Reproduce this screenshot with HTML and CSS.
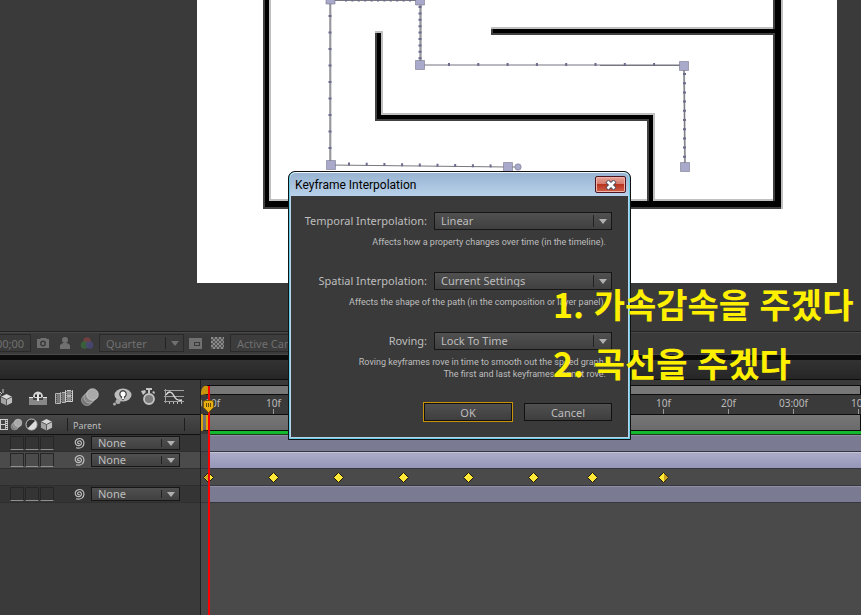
FILE: index.html
```html
<!DOCTYPE html>
<html lang="ko">
<head>
  <meta charset="UTF-8" />
  <meta name="viewport" content="width=device-width, initial-scale=1" />
  <title>Keyframe Interpolation</title>
  <link rel="stylesheet" href="styles.css">
</head>
<body>
  <svg class="defs" aria-hidden="true">
    <defs>
      <symbol id="cube" viewBox="0 0 14 14">
        <path fill="#d8d8d8" d="M7 1l6 3-6 3-6-3z"/>
        <path fill="#a2a2a2" d="M1 4l6 3v6.500l-6-3z"/>
        <path fill="#bdbdbd" d="M13 4L7 7v6.500l6-3z"/>
        <path fill="none" stroke="#555" d="M1 4l6 3 6-3M7 7v6"/>
      </symbol>
      <symbol id="blur" viewBox="0 0 20 20">
        <circle cx="7" cy="13" r="5.500" fill="#747474" stroke="#bbb" stroke-width=".6"/>
        <circle cx="9.500" cy="10.500" r="5.500" fill="#858585" stroke="#ccc" stroke-width=".6"/>
        <circle cx="12.500" cy="7.500" r="5.800" fill="#a9a9a9" stroke="#ddd" stroke-width=".6"/>
      </symbol>
      <symbol id="swirl" viewBox="0 0 12 12">
        <path fill="none" stroke="#bdbdbd" stroke-width="1.200" d="M6.500 6.200c-.4.9-2 .5-1.900-.8.1-1.600 2.600-2 3.500-.4 1 2-.8 3.900-2.700 3.700C2.800 8.500 1.600 5.800 2.700 3.600 4 1.200 7.600.8 9.600 2.700c1.900 2 1.700 5.400-.4 7.200-1.500 1.200-4 1.600-6.200.9"/>
      </symbol>
    </defs>
  </svg>

  <main class="viewer">
    <svg class="comp" viewBox="197 0 640 283">
      <!-- walls: light edge up/right, dark edge down/left -->
      <g fill="#c0c0c0">
        <path d="M263 0h8v209h-8zM491 27h284v4H491zM375 31h8v84h-8zM377 113h278v4H377zM649 113h6v90h-6zM263 199h512v4H263zM777 0h6v209h-6z"/>
      </g>
      <g fill="#404040">
        <path d="M263 0h4v209h-4zM491 29h284v6H491zM375 33h4v88h-4zM375 117h276v4H375zM647 119h4v82h-4zM263 203h518v6H263zM773 0h6v201h-6z"/>
      </g>
      <g fill="#000">
        <path d="M265 0h4v203h-4zM493 29h284v4H493zM377 33h4v84h-4zM377 115h276v4H377zM649 115h4v88h-4zM265 201h516v6H265zM775 0h6v207h-6z"/>
      </g>
      <g fill="none" stroke="#b9b9bf" stroke-width="2">
        <path d="M330.500 0V165M420 1V65H684L685 167"/>
        <path stroke-width="1" stroke="#77777f" d="M330 0V165L508 167H518M331 .5H420M421 1V66M600 65.500H684M684 66L685 167"/>
      </g>
      <g fill="none" stroke="#6b6b8c" stroke-width="3">
        <path stroke-dasharray="2 14.500" d="M330 15V160"/>
        <path stroke-dasharray="2 15.700" d="M348 164L500 166"/>
        <path stroke-dasharray="2 4.400" d="M420 6V60M345 0H416"/>
        <path stroke-dasharray="2 27.300" d="M448 64.500H680"/>
        <path stroke-dasharray="2 7.200" d="M684.500 73V162"/>
      </g>
      <g fill="#a9a9cb" stroke="#77778c" stroke-width=".6">
        <path d="M326 -5h9v9h-9zM415.500 -4h9v9h-9zM415.500 60.500h9v9h-9zM679.500 61.500h9v9h-9zM680.500 162.500h9v9h-9zM326.500 160.500h9v9h-9zM503.500 162.500h9v9h-9z"/>
        <circle cx="518" cy="167" r="3.200"/>
      </g>
    </svg>
  </main>

  <div class="viewer-bar">
    <button class="timecode">0;00;00;00</button>
    <svg class="snapshot" width="14" height="12"><path fill="#707070" d="M1 2h3l1-1h5l1 1h2v9H1z"/><circle cx="7" cy="6.500" r="3" fill="#3a3a3a"/><circle cx="7" cy="6.500" r="1.500" fill="#707070"/></svg>
    <svg class="person" width="12" height="14"><circle cx="6" cy="4" r="3" fill="#707070"/><path fill="#707070" d="M1 13V9l3-2h4l3 2v4z"/></svg>
    <svg class="channels" width="14" height="14"><circle cx="7" cy="5" r="3.800" fill="#704040"/><circle cx="4.500" cy="9" r="3.800" fill="#3b5f3b"/><circle cx="9.500" cy="9" r="3.800" fill="#484878" opacity=".85"/></svg>
    <span class="drop dim quality"><select aria-label="Resolution"><option>Quarter</option></select></span>
    <svg class="region" width="13" height="11"><path fill="#707070" fill-rule="evenodd" d="M0 0h13v11H0zM5 4v4h6V4z"/><path fill="#707070" d="M6 5h4v2H6z"/></svg>
    <svg class="checker" width="13" height="12"><path fill="#555" d="M0 0h13v12H0z"/><path stroke="#8a8a8a" stroke-width="2" stroke-dasharray="2 2" d="M0 1h13M2 3h11M0 5h13M2 7h11M0 9h13M2 11h11"/></svg>
    <span class="drop dim camera"><select aria-label="View"><option>Active Camera</option></select></span>
  </div>
  <div class="tab-strip"></div>

  <section class="timeline">
    <div class="layers">
      <div class="toolbar">
        <div class="group">
          <button aria-label="Draft 3D"><svg viewBox="0 0 20 20"><use href="#cube" x="4" y="6" width="13" height="13"/><path stroke="#ccc" d="M3 4l3 3M7 2v4M1 8h4"/></svg></button>
        </div>
        <div class="group">
          <button aria-label="Shy layers"><svg viewBox="0 0 20 20"><path fill="#888" d="M1 10h18v8H1z"/><path fill="#444" d="M5 10h10v3H5z"/><path fill="#d6d6d6" d="M5 10a5 5.500 0 0 1 10 0l-2 1H7z"/><path fill="#333" d="M7 7.500h2v2.500H7zM11 7.500h2v2.500h-2z"/><path fill="#e6e6e6" d="M9 8h2v6H9zM1 10h4v1H1zM15 10h4v1h-4z"/></svg></button>
          <button aria-label="Frame blending"><svg viewBox="0 0 20 20"><g stroke="#b5b5b5" fill="#777"><path d="M1.500 6.500h5v10h-5zM6.500 5.500h5v10h-5z"/><path fill="#8c8c8c" stroke="#d0d0d0" d="M11.500 3.500h7v11h-7z"/></g><path stroke="#444" stroke-dasharray="1 1" d="M2.500 7v10M7.500 5v11M12.500 3v12M17.500 3v12"/><path stroke="#ddd" d="M13 9h4"/></svg></button>
          <button aria-label="Motion blur"><svg viewBox="0 0 20 20"><use href="#blur" width="20" height="20"/></svg></button>
        </div>
        <div class="group">
          <button aria-label="Brainstorm"><svg viewBox="0 0 20 20"><ellipse cx="11" cy="8" rx="8.500" ry="6.500" fill="#bcbcbc"/><circle cx="6" cy="14.500" r="2.500" fill="#aaa"/><circle cx="2.500" cy="17" r="1.500" fill="#aaa"/><path fill="#444" d="M11 3a4 4 0 0 1 2.500 7L11 13.500 8.500 10A4 4 0 0 1 11 3z"/><circle cx="11" cy="7" r="2.500" fill="#fff"/><path fill="#eee" d="M10 9h2v3h-2z"/></svg></button>
          <button aria-label="Auto keyframe"><svg viewBox="0 0 20 20"><circle cx="11" cy="12" r="5" fill="#7b7b7b" stroke="#c4c4c4" stroke-width="1.800"/><path fill="#c4c4c4" d="M8 1h6v2h-2v3h-2V3H8zM3 4l4-1 1 2-3 3zM14 5l2-1 1 2-1 1z"/></svg></button>
          <button aria-label="Graph editor"><svg viewBox="0 0 20 20"><path stroke="#bbb" d="M0 3.500h20M0 14.500h20M1.500 2v14M0 9.500h20" opacity=".8"/><path fill="none" stroke="#ddd" stroke-width="1.400" d="M2 8c3-5 6-3 8 1s4 5 8 4"/><path stroke="#bbb" d="M5.500 15v2M9.500 15v2M13.500 15v2M17.500 15v2"/></svg></button>
        </div>
      </div>

      <div class="columns">
        <div class="switches">
          <svg viewBox="0 0 13 13"><path fill="#d0d0d0" d="M2 1h11v11H2z"/><path fill="#444" d="M6 2h4v4H6zM6 7h4v4H6z"/><path stroke="#444" stroke-dasharray="1 1" stroke-width="1.500" d="M11.500 2v10"/></svg>
          <svg><use href="#blur" width="13" height="13"/></svg>
          <svg viewBox="0 0 13 13"><circle cx="6.500" cy="6.500" r="5.500" fill="#ddd"/><path fill="#333" d="M10.400 2.600a5.500 5.500 0 0 0-7.800 7.800z"/><circle cx="6.500" cy="6.500" r="5.500" fill="none" stroke="#bbb"/></svg>
          <svg><use href="#cube" width="13" height="13"/></svg>
        </div>
        <span class="parent-head">Parent</span>
      </div>

      <div class="row">
        <i class="cell"></i><i class="cell"></i><i class="cell"></i>
        <svg class="whip"><use href="#swirl"/></svg>
        <span class="drop parent"><select aria-label="Parent of layer 1"><option>None</option></select></span>
      </div>
      <div class="row selected">
        <i class="cell"></i><i class="cell"></i><i class="cell"></i>
        <svg class="whip"><use href="#swirl"/></svg>
        <span class="drop parent"><select aria-label="Parent of layer 2"><option>None</option></select></span>
      </div>
      <div class="row property"></div>
      <div class="row">
        <i class="cell"></i><i class="cell"></i><i class="cell"></i>
        <svg class="whip"><use href="#swirl"/></svg>
        <span class="drop parent"><select aria-label="Parent of layer 3"><option>None</option></select></span>
      </div>
    </div>

    <div class="tracks">
      <div class="navigator"></div>
      <ol class="ruler">
        <li>0:00f</li>
        <li>10f</li>
        <li></li>
        <li></li>
        <li></li>
        <li></li>
        <li></li>
        <li>10f</li>
        <li>20f</li>
        <li>03:00f</li>
        <li>10f</li>
      </ol>
      <div class="work-area"></div>
      <div class="cache"></div>
      <div class="track"><div class="bar"></div></div>
      <div class="track"><div class="bar selected"></div></div>
      <div class="track">
        <svg class="keys" width="660" height="16">
          <defs><path id="key" d="M0 -5L5 0 0 5-5 0z" fill="#ffe838" stroke="#1c1a08"/></defs>
          <use href="#key" x="7.500" y="8.500"/>
          <use href="#key" x="72.500" y="8.500"/>
          <use href="#key" x="137.500" y="8.500"/>
          <use href="#key" x="202.500" y="8.500"/>
          <use href="#key" x="267.500" y="8.500"/>
          <use href="#key" x="332.500" y="8.500"/>
          <use href="#key" x="391.500" y="8.500"/>
          <use href="#key" x="462.500" y="8.500"/>
          <path fill="#c9a020" d="M7.500 4.500l-4 4 4 4zM463 4.500l4 4-4 4z"/>
        </svg>
      </div>
      <div class="track"><div class="bar"></div></div>
      <div class="playhead">
        <svg width="11" height="13"><path fill="#e8b014" stroke="#7a5600" d="M.5 1.500l2-1h6l2 1v6l-5 5-5-5z"/><path stroke="#6b4a00" d="M3.500 3v4M5.500 3v4M7.500 3v4"/></svg>
      </div>
    </div>
  </section>

  <form class="dialog" role="dialog" aria-labelledby="dialogTitle">
    <div class="titlebar">
      <h1 id="dialogTitle">Keyframe Interpolation</h1>
      <button type="button" class="close" aria-label="Close"><svg width="12" height="10"><path stroke="#4a4a5c" stroke-width="4.500" d="M2 1l8 8M10 1L2 9"/><path stroke="#fff" stroke-width="2.600" d="M2.500 1.500l7 7M9.500 1.500l-7 7"/></svg></button>
    </div>
    <div class="dialog-body">
      <div class="field">
        <label for="temporal">Temporal Interpolation:</label>
        <span class="drop"><select id="temporal"><option>Linear</option></select></span>
        <p>Affects how a property changes over time (in the timeline).</p>
      </div>
      <div class="field">
        <label for="spatial">Spatial Interpolation:</label>
        <span class="drop"><select id="spatial"><option>Current Settings</option></select></span>
        <p>Affects the shape of the path (in the composition or layer panel).</p>
      </div>
      <div class="field">
        <label for="roving">Roving:</label>
        <span class="drop"><select id="roving"><option>Lock To Time</option></select></span>
        <p>Roving keyframes rove in time to smooth out the speed graph.<br>The first and last keyframes cannot rove.</p>
      </div>
      <div class="actions">
        <button type="submit" class="ok">OK</button>
        <button type="button">Cancel</button>
      </div>
    </div>
  </form>

  <div class="notes">
    <p>1. 가속감속을 주겠다</p>
    <p>2. 곡선을 주겠다</p>
  </div>
</body>
</html>
```
FILE: styles.css
```css
* {
  box-sizing: border-box;
}
body {
  position: relative;
  display: flex;
  flex-direction: column;
  min-height: 100vh;
  margin: 0;
  overflow: hidden;
  background: #3a3a3a;
  color: #bebebe;
  font-family: "Noto Sans", "Noto Sans CJK KR", sans-serif;
  font-size: 11px;
}
button,
select {
  margin: 0;
  padding: 0;
  border: 0;
  background: none;
  color: inherit;
  font: inherit;
}
svg {
  display: block;
  flex: none;
}
.defs {
  position: absolute;
  width: 0;
  height: 0;
}

/* dropdowns */
.drop {
  position: relative;
  display: block;
  height: 18px;
  border: 1px solid #161616;
  background: linear-gradient(#505050, #404040);
}
.drop select {
  display: block;
  width: 100%;
  height: 100%;
  padding-left: 6px;
  appearance: none;
}
.drop::before {
  content: "";
  position: absolute;
  top: 2px;
  bottom: 2px;
  right: 17px;
  width: 1px;
  background: #222;
}
.drop::after {
  content: "";
  position: absolute;
  top: 6px;
  right: 4px;
  border: 4px solid transparent;
  border-top: 5px solid #b0b0b0;
  border-bottom: 0;
}
.drop.dim {
  color: #707070;
  border-color: #2a2a2a;
  background: #3c3c3c;
}
.drop.dim::after {
  border-top-color: #707070;
}

/* composition viewer */
.viewer {
  height: 331px;
  padding-left: 197px;
  overflow: hidden;
}
.comp {
  width: 640px;
  height: 283px;
  background: #fff;
}
.viewer-bar {
  display: flex;
  align-items: center;
  height: 24px;
  border-top: 1px solid #222;
  border-bottom: 1px solid #4a4a4a;
  box-shadow: inset 0 1px #484848;
  color: #707070;
}
.timecode {
  display: flex;
  justify-content: flex-end;
  width: 31px;
  height: 18px;
  padding-right: 6px;
  border: 1px solid #2a2a2a;
  border-left: 0;
  overflow: hidden;
  align-items: center;
}
.snapshot {
  margin-left: 5px;
}
.person {
  margin-left: 9px;
}
.channels {
  margin: 0 5px 0 9px;
}
.quality {
  width: 85px;
}
.region {
  margin-left: 5px;
}
.checker {
  margin: 0 6px 0 9px;
}
.camera {
  width: 110px;
}
.tab-strip {
  height: 25px;
  border-top: 5px solid #0c0c0c;
  border-bottom: 1px solid #0c0c0c;
  background: linear-gradient(#333, #262626);
}

/* timeline */
.timeline {
  display: grid;
  grid-template-columns: 201px 1fr;
  flex: 1;
}
.layers {
  border-right: 1px solid #1e1e1e;
  overflow: hidden;
}
.toolbar {
  display: flex;
  gap: 12px;
  height: 34px;
  margin-left: -4px;
  align-items: center;
}
.group {
  display: flex;
  gap: 6px;
}
.toolbar svg {
  width: 20px;
  height: 20px;
}
.columns {
  display: flex;
  align-items: center;
  height: 21px;
  border-top: 1px solid #111;
  border-bottom: 1px solid #111;
  background: linear-gradient(#484848, #383838);
}
.switches {
  display: flex;
  gap: 2px;
  width: 72px;
  margin-left: -5px;
}
.switches svg {
  width: 13px;
  height: 13px;
}
.parent-head {
  width: 118px;
  padding: 2px 0 0 5px;
  border-left: 1px solid #1e1e1e;
  border-right: 1px solid #1e1e1e;
  font-size: 9px;
  line-height: 11px;
}
.row {
  display: flex;
  align-items: center;
  height: 17px;
  padding-left: 10px;
  border-bottom: 1px solid #2e2e2e;
  background: #343434;
}
.row.selected {
  background: #4b4b4b;
}
.row.property {
  background: #3b3b3b;
}
.cell {
  width: 14px;
  height: 14px;
  margin-right: 1px;
  border: 1px solid #262626;
  border-bottom-color: #909090;
}
.whip {
  width: 12px;
  height: 12px;
  margin: 0 6px 0 18px;
}
.drop.parent {
  width: 89px;
  height: 14px;
}
.parent select {
  line-height: 12px;
}
.parent::after {
  top: 4px;
}

.tracks {
  position: relative;
  overflow: hidden;
  padding-top: 5px;
  background: linear-gradient(#3a3a3a 54px, #4a4a4a 0);
}
.navigator {
  height: 10px;
  border: 1px solid #0c0c0c;
  border-left: 7px solid #c8960c;
  border-radius: 7px 0 0 0;
  background: #777;
}
.ruler {
  display: flex;
  height: 19px;
  margin: 0 0 0 -25px;
  padding: 0;
  list-style: none;
  color: #bbb;
  font-size: 10px;
  line-height: 16px;
  text-align: center;
}
.ruler li {
  position: relative;
  flex: 0 0 65px;
}
.ruler li::after {
  content: "";
  position: absolute;
  left: 32px;
  bottom: 0;
  width: 1px;
  height: 5px;
  background: #999;
}
.work-area {
  height: 17px;
  border: 1px solid #0c0c0c;
  border-left: 7px double #d9a20e;
  background: linear-gradient(#777, #6a6a6a);
}
.cache {
  height: 4px;
  margin-left: 8px;
  border-bottom: 1px solid #1b3a1b;
  background: #12b92c;
}
.track {
  height: 17px;
  border-bottom: 1px solid #363640;
}
.bar {
  height: 16px;
  margin-left: 8px;
  border-top: 1px solid #9090a4;
  background: #7a7a92;
}
.bar.selected {
  border-top-color: #c4c4d8;
  background: linear-gradient(#aaaac8, #9696b8);
}
.playhead {
  position: absolute;
  left: 7px;
  top: 6px;
  bottom: 0;
  width: 2px;
  background: #f00;
}
.playhead svg {
  position: absolute;
  left: -5px;
  top: 14px;
}

/* interpolation dialog */
.dialog {
  position: absolute;
  left: 288px;
  top: 171px;
  width: 343px;
  border: 1px solid #111;
  border-radius: 7px 7px 0 0;
  background: #3a3a3a;
  box-shadow: inset 0 0 0 1px #66cfe8, inset 0 0 0 2px #b9d2ec;
}
.titlebar {
  display: flex;
  justify-content: space-between;
  align-items: center;
  height: 24px;
  margin: 0 1px;
  padding: 0 3px 0 5px;
  border-top: 1px solid #f0f6fc;
  border-radius: 6px 6px 0 0;
  background: linear-gradient(#98b4d2, #b9d1ea);
  color: #000;
}
.titlebar h1 {
  margin: 0;
  font-family: Roboto, sans-serif;
  font-size: 12px;
  font-weight: normal;
}
.close {
  display: flex;
  align-items: center;
  justify-content: center;
  width: 31px;
  height: 17px;
  border: 1px solid #4c1420;
  border-radius: 2px;
  background: linear-gradient(#e8a498, #d4796a 48%, #b8341f 50%, #d0604a);
  box-shadow: inset 0 0 0 1px #eeb4aa;
}
.dialog-body {
  padding: 16px 18px 18px 12px;
}
.field {
  display: grid;
  grid-template-columns: 1fr 178px;
  column-gap: 7px;
  height: 60px;
  align-content: start;
  text-align: right;
}
.field label {
  line-height: 18px;
  white-space: nowrap;
}
.field select {
  padding-bottom: 2px;
}
.field p {
  grid-column: 1 / -1;
  margin: 6px 6px 0 0;
  font-family: Roboto, sans-serif;
  font-size: 9px;
  line-height: 12px;
}
.actions {
  display: flex;
  align-items: center;
  justify-content: flex-end;
  gap: 12px;
  margin-top: 11px;
}
.actions button {
  width: 88px;
  height: 18px;
  border: 1px solid #111;
  background: linear-gradient(#505050, #3e3e3e);
}
.actions .ok {
  outline: 1px solid #c8930a;
}

/* lesson notes over the window */
.notes {
  position: absolute;
  left: 553px;
  top: 274px;
  color: #fff000;
  font-family: "Noto Sans CJK KR", sans-serif;
  font-size: 34px;
  font-weight: bold;
  line-height: 59px;
  white-space: nowrap;
}
.notes p {
  margin: 0;
}
```
